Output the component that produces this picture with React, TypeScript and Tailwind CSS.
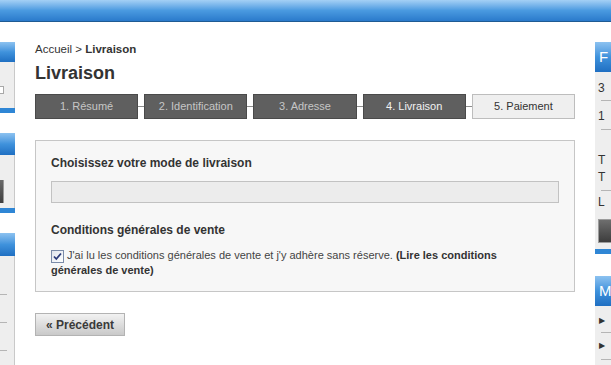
import { Fragment } from 'react';

const steps = [
  { label: '1. Résumé', state: 'done' },
  { label: '2. Identification', state: 'done' },
  { label: '3. Adresse', state: 'done' },
  { label: '4. Livraison', state: 'current' },
  { label: '5. Paiement', state: 'todo' },
];

const blueHead = 'bg-gradient-to-b from-[#8cc2f0] via-[#3f92dc] to-[#1f6fc2]';

const LeftSidebar = () => (
  <div className="w-[15px] shrink-0 overflow-hidden flex flex-col">
    {/* box 1 */}
    <div className={`h-[20px] ${blueHead}`} />
    <div className="h-[46px] bg-[#eeeeee] border-r border-[#c9c9c9] relative">
      <div className="absolute left-0 top-[24px] w-[4px] h-[8px] border border-l-0 border-[#a8a8a8] bg-white" />
    </div>
    <div className="h-[5px] bg-[#2f86d5]" />

    {/* box 2 */}
    <div className={`mt-[20px] h-[22px] ${blueHead}`} />
    <div className="h-[53px] bg-[#eeeeee] border-r border-[#c9c9c9] relative">
      <div className="absolute left-0 top-[25px] w-[4px] h-[23px] bg-gradient-to-b from-[#6a6a6a] to-[#3f3f3f] border-r border-[#9a9a9a]" />
    </div>
    <div className="h-[5px] bg-[#2f86d5]" />

    {/* box 3 */}
    <div className={`mt-[20px] h-[23px] ${blueHead}`} />
    <div className="flex-1 bg-[#eeeeee] border-r border-[#c9c9c9] pt-[38px] flex flex-col gap-[27px]">
      <div className="w-[7px] h-px bg-[#b5b5b5]" />
      <div className="w-[7px] h-px bg-[#b5b5b5]" />
      <div className="w-[7px] h-px bg-[#b5b5b5]" />
    </div>
  </div>
);

const RightSidebar = () => (
  <div className="w-[16px] shrink-0 overflow-hidden flex flex-col text-[12px] text-[#333] font-['Liberation_Sans',Arial,sans-serif]">
    <div className={`h-[30px] ${blueHead} text-white text-[15px] leading-[30px] pl-[4px]`}>F</div>
    <div className="bg-[#eeeeee] pl-[3px]">
      <div className="h-[28px] leading-[32px]">3</div>
      <div className="h-px bg-[#b5b5b5] ml-[3px]" />
      <div className="h-[28px] leading-[30px]">1</div>
      <div className="h-px bg-[#b5b5b5] ml-[3px]" />
      <div className="pt-[22px] leading-[17px]">
        <div>T</div>
        <div>T</div>
      </div>
      <div className="mt-[4px] h-px bg-[#b5b5b5] ml-[3px]" />
      <div className="leading-[22px]">L</div>
      <div className="mt-[6px] mb-[6px] h-[24px] w-[40px] bg-gradient-to-b from-[#6e6e6e] to-[#3d3d3d] border border-[#9c9c9c]" />
    </div>
    <div className="h-[5px] bg-[#2f86d5]" />

    <div className={`mt-[22px] h-[30px] ${blueHead} text-white text-[15px] leading-[30px] pl-[4px]`}>M</div>
    <div className="flex-1 bg-[#eeeeee] pl-[4px]">
      <div className="h-[26px] flex items-center text-[8px] text-[#333] pt-[4px]">▶</div>
      <div className="h-px bg-[#b5b5b5] ml-[2px]" />
      <div className="h-[26px] flex items-center text-[8px] text-[#333]">▶</div>
      <div className="h-px bg-[#b5b5b5] ml-[2px]" />
    </div>
  </div>
);

const Checkbox = () => (
  <span className="inline-flex align-[-2px] w-[13px] h-[13px] border border-[#7b8ba8] bg-gradient-to-br from-[#e0e4ec] to-white items-center justify-center mr-[3px]">
    <svg width="9" height="9" viewBox="0 0 9 9">
      <path d="M1 4.5 L3.3 7 L8 1.5" fill="none" stroke="#2b3a78" strokeWidth="1.8" />
    </svg>
  </span>
);

export default function App() {
  return (
    <div className="w-[611px] h-[365px] overflow-hidden bg-white flex flex-col font-['Liberation_Sans',Arial,sans-serif]">
      <div className="h-[22px] shrink-0 bg-gradient-to-b from-[#a4d0f5] via-[#4a9ae0] to-[#2a7acb] border-b border-[#1f5b93]" />

      <div className="flex-1 flex pt-[20px] gap-[20px] min-h-0">
        <LeftSidebar />

        <main className="w-[540px] shrink-0">
          <div className="text-[11.5px] leading-[14px] text-[#333]">
            Accueil &gt; <span className="font-bold">Livraison</span>
          </div>
          <h1 className="mt-[7px] text-[18px] leading-[20px] font-bold text-[#333]">Livraison</h1>

          <div className="mt-[11px] flex items-center">
            {steps.map((s, i) => (
              <Fragment key={s.label}>
                {i > 0 && <div className="w-[6px] h-px bg-[#8c8c8c] shrink-0" />}
                <div
                  className={
                    'flex-1 h-[25px] flex items-center justify-center text-[11px] border ' +
                    (s.state === 'done'
                      ? 'bg-[#5f5f5f] border-[#4a4a4a] text-[#c6c6c6]'
                      : s.state === 'current'
                      ? 'bg-[#5f5f5f] border-[#4a4a4a] text-[#f2f2f2]'
                      : 'bg-[#efefef] border-[#bdbdbd] text-[#333]')
                  }
                >
                  {s.label}
                </div>
              </Fragment>
            ))}
          </div>

          <div className="mt-[21px] border border-[#c6c6c6] bg-[#f7f7f7] px-[15px] pt-[15px] pb-[14px]">
            <h2 className="text-[12px] leading-[15px] font-bold text-[#333]">Choisissez votre mode de livraison</h2>
            <div className="mt-[10px] h-[22px] bg-[#ececec] border border-[#c2c2c2]" />

            <h2 className="mt-[20px] text-[12px] leading-[15px] font-bold text-[#333]">Conditions générales de vente</h2>
            <p className="mt-[10px] text-[11px] leading-[14px] text-[#444]">
              <Checkbox />
              J'ai lu les conditions générales de vente et j'y adhère sans réserve.{' '}
              <span className="font-bold text-[#333]">
                (Lire les conditions
                <br />
                générales de vente)
              </span>
            </p>
          </div>

          <button className="mt-[21px] h-[23px] px-[10px] text-[12px] font-bold text-[#3a3a3a] bg-gradient-to-b from-[#f2f2f2] to-[#c9c9c9] border border-[#b3b3b3]">
            « Précédent
          </button>
        </main>

        <RightSidebar />
      </div>
    </div>
  );
}
